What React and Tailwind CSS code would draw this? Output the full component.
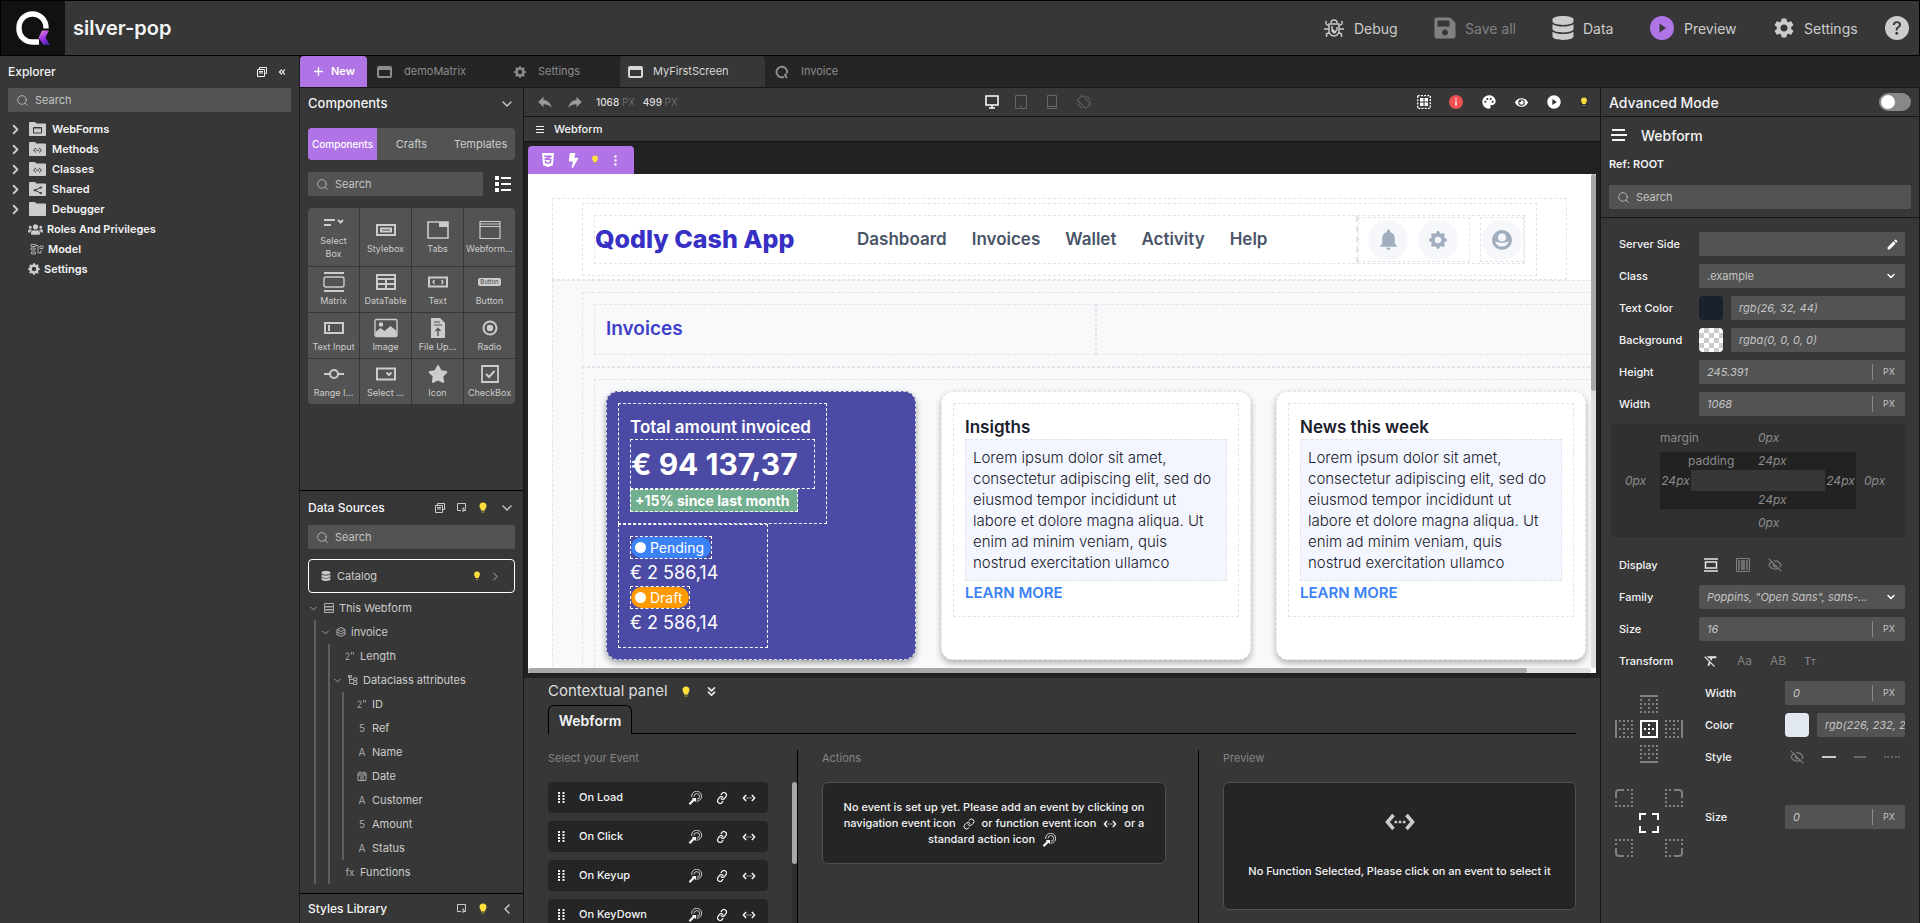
import { useState } from 'react'
import { ChevronDown, ChevronLeft, ChevronRight, ChevronsDown, ChevronsLeft, EyeOff, Link, Plus, Search } from 'lucide-react'
import { FaBolt, FaCss3Alt, FaDatabase, FaEye, FaSave, FaStar, FaUsers } from 'react-icons/fa'
import { BsGearFill, BsQuestionCircleFill, BsThreeDotsVertical } from 'react-icons/bs'
import {
  MdBorderBottom, MdBorderLeft, MdBorderOuter, MdBorderRight, MdBorderTop, MdEdit, MdFormatClear,
  MdNotifications, MdPalette, MdPlayCircle, MdReply, MdSettings
} from 'react-icons/md'

/* ---------- icons ---------- */

const Logo = ({ className }) => (
  <svg viewBox="0 0 34 34" className={className} fill="none">
    <defs>
      <linearGradient id="tail" x1="0.3" y1="0" x2="0.8" y2="1">
        <stop offset="0" stopColor="#e07bd8" />
        <stop offset="0.5" stopColor="#9b2fe8" />
        <stop offset="1" stopColor="#3b2a9c" />
      </linearGradient>
    </defs>
    <path d="M30 17.5V16.500A13.500 13.500 0 0 0 3 16.500V18A13 13 0 0 0 16 31H23" stroke="#fff" strokeWidth="5.400" />
    <path d="M26 19.500h7l-3.500 7L34 34h-6.500l-5-7.200z" fill="url(#tail)" />
  </svg>
)

const QIcon = ({ className }) => (
  <svg viewBox="0 0 14 14" className={className} fill="none" stroke="currentColor" strokeWidth="2">
    <path d="M12 8A5.300 5.300 0 1 0 7 12.300h2" />
    <path d="M11.500 8.500L10 10.500l2 2.500" />
  </svg>
)

const WindowIcon = ({ className }) => (
  <svg viewBox="0 0 15 12" className={className} fill="none" stroke="currentColor">
    <rect x="1" y="1" width="13" height="10" rx="1" strokeWidth="2" />
    <path d="M1 2.500h13" strokeWidth="3" />
  </svg>
)

const Bulb = ({ className }) => (
  <svg viewBox="0 0 8 12" className={className}>
    <path d="M4 .5A3.500 3.500 0 0 0 .5 4c0 2 1.500 2.500 1.500 4.500h4C6 6.500 7.500 6 7.500 4A3.500 3.500 0 0 0 4 .5z" fill="#ffdf3d" />
    <path d="M2.500 9.500h3v1h-3z" fill="#b9a13c" />
  </svg>
)

const CodeIcon = ({ className }) => (
  <svg viewBox="0 0 30 18" className={className} fill="none" stroke="currentColor" strokeWidth="3.500">
    <path d="M8.500 2L2.500 9l6 7M21.500 2l6 7-6 7" />
    <path d="M9.500 9h11" strokeWidth="2.600" strokeDasharray="2.600 1.600" />
  </svg>
)

const ActionIcon = ({ className }) => (
  <svg viewBox="0 0 14 14" className={className} fill="none" stroke="currentColor" strokeWidth=".8">
    <path d="M3.700 6A5 5 0 1 1 8.500 10.200" />
    <path d="M6 5.500A2.800 2.800 0 1 1 8.800 8.200" />
    <path d="M4 7h4v4L6.400 9.800 2.200 13.900.7 12.500l4-4.200z" fill="currentColor" stroke="none" />
  </svg>
)

const Grip = ({ className }) => (
  <svg viewBox="0 0 7 11" className={className} fill="currentColor">
    {[0, 3, 6, 9].map(y => (
      <g key={y}>
        <rect x="0" y={y} width="2" height="2" />
        <rect x="4.500" y={y} width="2" height="2" />
      </g>
    ))}
  </svg>
)

const BugIcon = ({ className }) => (
  <svg viewBox="0 0 20 20" className={className} fill="none" stroke="currentColor" strokeWidth="1.400">
    <path d="M7 5a3 3 0 0 1 6 0" />
    <path d="M5 6h10v7a5 5 0 0 1-10 0z" />
    <path d="M5 8L2 6V3M15 8l3-2V3M5 11H0M15 11h5M5.500 14.500L2.500 16v3M14.500 14.500l3 1.500v3" />
    <path d="M8 8v5l2 2 3-3V9M8 11l4 4" />
  </svg>
)

const PlayBadge = ({ className }) => (
  <svg viewBox="0 0 24 24" className={className}>
    <circle cx="12" cy="12" r="12" fill="#b174e6" />
    <path d="M9.500 7.500l6.500 4.500-6.500 4.500z" fill="#373737" />
  </svg>
)

const AccountIcon = ({ className }) => (
  <svg viewBox="0 0 20 20" className={className}>
    <circle cx="10" cy="10" r="10" fill="currentColor" />
    <path d="M3 11q2 1.500 7 1.500t7-1.500a7.200 7.200 0 0 1-14 0z" fill="#f5f7fa" />
    <circle cx="10" cy="7.500" r="5.200" fill="currentColor" />
    <circle cx="10" cy="7.500" r="4" fill="#f5f7fa" />
  </svg>
)

const folderGlyphs = {
  form: <path d="M4.500 5.500h8v5.500h-8z M4.500 6h8" />,
  code: <path d="M7 6L4.500 8.200 7 10.500M10 6l2.500 2.200L10 10.500M7 8.200h3" />,
  share: <path d="M11.500 5.500L6 8.200l5.500 2.800M11 5h1.500v1H11zM11 10.500h1.500v1H11zM5 7.800h1.500v1H5z" />,
  none: null,
}

const Folder = ({ glyph }) => (
  <svg viewBox="0 0 17 14" className="h-3.5 w-[17px] shrink-0" fill="none">
    <path d="M0 1Q0 0 1 0h5l1.500 1.500H16q1 0 1 1V13q0 1-1 1H1q-1 0-1-1z" fill="#ccc" />
    <g stroke="#3a3a3a">{folderGlyphs[glyph]}</g>
  </svg>
)

const ModelIcon = ({ className }) => (
  <svg viewBox="0 0 14 12" className={className} fill="none" stroke="currentColor">
    <path d="M1 1.500h4.500v2H1zM1 5h4v2H1zM1.500 9h4v2h-4zM10 3h3v2.500h-3zM6 2.500h2V10h3V7" />
  </svg>
)

const CollapseAll = ({ className }) => (
  <svg viewBox="0 0 10 10" className={className} fill="none" stroke="currentColor">
    <path d="M2.500 2.500v-2h7v6h-2M.5 2.500h7v7h-7zM2 6h4M2 4.500h4" />
  </svg>
)

const Inspect = ({ className }) => (
  <svg viewBox="0 0 10 10" className={className} fill="none" stroke="currentColor">
    <path d="M4 7.500H.5v-7h8V6M6 4.500v4.500M6 5l3 2.500H6" />
  </svg>
)

const ListIcon = ({ className }) => (
  <svg viewBox="0 0 16 16" className={className} fill="currentColor">
    <path d="M0 0h4v4H0zM0 6h4v4H0zM0 12h4v4H0zM6 1h10v2H6zM6 7h10v2H6zM6 13h10v2H6z" />
  </svg>
)

const tileIcons = {
  select: <><path d="M2 6h11M2 11h7" /><path d="M16 6l2.500 2.500L21 6" /></>,
  stylebox: <><path d="M3 5h18v10H3z" /><path d="M7 8.500h10v3H7z" /></>,
  tabs: <><path d="M2 2h20v16H2z" strokeWidth="1.600" /><path d="M13 2h9v5h-9z" fill="currentColor" stroke="none" /></>,
  webform: <path d="M2 1.500h20v17H2zM2 6.500h20M2 4h20" strokeWidth="1.200" />,
  matrix: <><path d="M2 1h20M2 19h20" /><rect x="2" y="5" width="20" height="10" rx="2" strokeWidth="1.400" /></>,
  table: <path d="M3 3h18v14H3zM3 7h18M3 12h18M12 7v10" />,
  text: <><path d="M3 5.500h18v9H3z" /><path d="M8.500 8L7 10l1.500 2M15.500 8l1.500 2-1.500 2" strokeWidth="1.400" /></>,
  input: <><path d="M3 5h18v10H3z" /><path d="M7 7v6" /></>,
  image: <><rect x="1" y="1.500" width="22" height="17" rx="1.500" strokeWidth="1.400" /><circle cx="7" cy="6.500" r="2.200" fill="currentColor" stroke="none" /><path d="M1.500 18v-4l5-4 4 3 6-5 6 5v5z" fill="currentColor" stroke="none" /></>,
  file: <><path d="M5 0h9l5 5v15H5z" fill="currentColor" stroke="none" /><path d="M8 4h6M8 7h8" stroke="#535353" strokeWidth="1" /><path d="M12 18v-7M9.500 13l2.500-2.500L14.500 13" stroke="#535353" strokeWidth="1.400" /></>,
  radio: <><circle cx="12" cy="10" r="6.500" /><circle cx="12" cy="10" r="3.200" fill="currentColor" stroke="none" /></>,
  range: <><path d="M2 10h6M16 10h6" /><circle cx="12" cy="10" r="4" /></>,
  dropdown: <><path d="M3 4.500h18v11H3z" /><path d="M12.500 8.500l2.500 2.500 2.500-2.500" /></>,
  checkbox: <><path d="M4 2h16v16H4z" strokeWidth="1.800" /><path d="M8 10l3 3 5.500-6" /></>,
}

const TileIcon = ({ name }) => {
  if (name === 'star') return <FaStar size={20} />
  if (name === 'button') return <span className="flex h-5 items-center"><span className="rounded-xs bg-[#ccc] px-0.5 text-[6px] leading-2 text-[#444]">Button</span></span>
  return (
    <svg viewBox="0 0 24 20" className="h-5 w-6" fill="none" stroke="currentColor" strokeWidth="2">{tileIcons[name]}</svg>
  )
}

/* ---------- shared bits ---------- */

const SearchBox = ({ id, className = '' }) => (
  <label htmlFor={id} className={`flex h-6 items-center gap-1.5 rounded-xs bg-[#535353] px-2 text-[#c4c4c4] ${className}`}>
    <Search size={13} strokeWidth={1.5} className="shrink-0" />
    <input id={id} type="text" placeholder="Search" className="w-full min-w-0 bg-transparent text-[11px] outline-none placeholder:text-[#c4c4c4]" />
  </label>
)

/* ---------- header ---------- */

const Header = () => (
  <header className="flex h-14 shrink-0 items-center border border-black bg-[#373737] text-[14px] text-[#ccc]">
    <div className="flex h-full w-16 items-center justify-center bg-[#111]">
      <Logo className="size-[34px]" />
    </div>
    <h1 className="ml-2 flex-1 text-[20px] font-semibold text-gray-100">silver-pop</h1>
    <nav className="flex items-center pr-2.5">
      <button className="flex w-[109px] items-center gap-2.5"><BugIcon className="size-5" />Debug</button>
      <button className="flex w-[118px] items-center gap-2 text-[#808080]"><FaSave size={24} />Save all</button>
      <button className="flex w-[99px] items-center gap-2"><FaDatabase size={24} />Data</button>
      <button className="flex w-[122px] items-center gap-2.5"><PlayBadge className="size-6" />Preview</button>
      <button className="flex w-[113px] items-center gap-2"><MdSettings size={24} />Settings</button>
      <button aria-label="Help"><BsQuestionCircleFill size={24} /></button>
    </nav>
  </header>
)

/* ---------- explorer ---------- */

const folders = [
  { name: 'WebForms', glyph: 'form' },
  { name: 'Methods', glyph: 'code' },
  { name: 'Classes', glyph: 'code' },
  { name: 'Shared', glyph: 'share' },
  { name: 'Debugger', glyph: 'none' },
]

const Explorer = () => (
  <aside className="w-[300px] shrink-0 border-r border-[#1c1c1c] bg-[#373737] px-2 text-gray-100">
    <div className="flex h-8 items-center gap-2.5 pr-1">
      <h2 className="flex-1 text-[12px] font-medium">Explorer</h2>
      <button aria-label="Collapse all"><CollapseAll className="size-2.5" /></button>
      <button aria-label="Hide panel"><ChevronsLeft size={10} strokeWidth={3} /></button>
    </div>
    <SearchBox id="search-files" />
    <ul className="pt-[7px] text-[11px] font-semibold">
      {folders.map(f => (
        <li key={f.name}>
          <button className="flex h-5 items-center gap-1.5">
            <ChevronRight size={15} strokeWidth={3} className="text-[#ccc]" />
            <Folder glyph={f.glyph} />
            {f.name}
          </button>
        </li>
      ))}
      <li><button className="flex h-5 items-center gap-1 pl-5"><FaUsers size={15} color="#ccc" />Roles And Privileges</button></li>
      <li><button className="flex h-5 items-center gap-1 pl-[22px]"><ModelIcon className="h-3 w-3.5 text-[#aaa]" />Model</button></li>
      <li><button className="flex h-5 items-center gap-1 pl-5"><BsGearFill size={12} color="#ccc" />Settings</button></li>
    </ul>
  </aside>
)

/* ---------- tabs ---------- */

const Tabs = () => (
  <div className="flex h-8 shrink-0 items-stretch border-b border-[#161616] bg-[#252525] text-[11px] text-[#8c8c8c]">
    <button className="mr-0.5 flex w-[67px] items-center gap-1.5 rounded-t-sm bg-[#b174e6] pl-3 font-semibold text-white"><Plus size={13} strokeWidth={2.5} />New</button>
    <button className="flex w-[137px] items-center gap-3 pl-2"><WindowIcon className="h-3 w-[15px]" />demoMatrix</button>
    <button className="flex w-[114px] items-center gap-3 pl-2"><BsGearFill size={12} />Settings</button>
    <button className="flex w-[145px] items-center gap-2.5 rounded-t-sm bg-[#373737] pl-2 text-[#d6d6d6]"><WindowIcon className="h-3 w-[15px]" />MyFirstScreen</button>
    <button className="flex items-center gap-3 pl-2.5"><QIcon className="size-3.5" />Invoice</button>
  </div>
)

/* ---------- components + data sources ---------- */

const tiles = [
  ['Select Box', 'select'], ['Stylebox', 'stylebox'], ['Tabs', 'tabs'], ['Webform...', 'webform'],
  ['Matrix', 'matrix'], ['DataTable', 'table'], ['Text', 'text'], ['Button', 'button'],
  ['Text Input', 'input'], ['Image', 'image'], ['File Up...', 'file'], ['Radio', 'radio'],
  ['Range I...', 'range'], ['Select ...', 'dropdown'], ['Icon', 'star'], ['CheckBox', 'checkbox'],
]

const attributes = [
  ['num', 'ID'], ['5', 'Ref'], ['A', 'Name'], ['cal', 'Date'], ['A', 'Customer'], ['5', 'Amount'], ['A', 'Status'],
]

const treeIcons = {
  form: <path d="M.5.5h9v3h-9zM.5 4h9v2.500h-9zM.5 7h9v2.500h-9z" />,
  stack: <path d="M5 .5L9 2.500 5 4.500 1 2.500zM1 5l4 2 4-2M1 7.500l4 2 4-2M1 2.500V8M9 2.500V8" />,
  branch: <path d="M1.500 0v8.500H5M1.500 4.500H5M.5.5h3v2h-3zM5.500 3h3.500v2.500H5.500zM5.500 7h3.500v2.500H5.500z" />,
  cal: <path d="M1 2h8v7.500H1zM1 4h8M3 .5V2M7 .5V2M3 6h4M3 8h4" />,
  num: <path d="M.8 3.500q0-1.500 1.700-1.500t1.700 1.500q0 1-3.400 5h3.800M6.500 1v2.500M8.500 1v2.500" strokeWidth=".9" />,
}

const TreeMark = ({ type }) => (
  <span className="flex w-3 shrink-0 justify-center text-[10px] leading-3 text-[#aaa]">
    {treeIcons[type] ? (
      <svg viewBox="0 0 10 10" className="size-2.5" fill="none" stroke="currentColor">{treeIcons[type]}</svg>
    ) : type}
  </span>
)

const TreeRow = ({ mark, label, open }) => (
  <button className="flex h-6 items-center gap-1">
    {open && <ChevronDown size={11} strokeWidth={1.5} className="shrink-0" />}
    <TreeMark type={mark} />
    {label}
  </button>
)

const Palette = () => {
  const [tab, setTab] = useState('Components')
  return (
    <aside className="flex w-56 shrink-0 flex-col border-r border-[#161616] text-[#ccc]">
      <section className="flex-1 px-2">
        <div className="flex h-8 items-center justify-between">
          <h2 className="text-[13px] font-medium text-gray-100">Components</h2>
          <button aria-label="Collapse components"><ChevronDown size={16} /></button>
        </div>
        <div className="mt-2 grid h-8 grid-cols-3 overflow-hidden rounded bg-[#535353] text-[11px]">
          {['Components', 'Crafts', 'Templates'].map(t => (
            <button key={t} onClick={() => setTab(t)} className={t === tab ? 'bg-[#b174e6] text-[10px] font-medium text-white' : ''}>{t}</button>
          ))}
        </div>
        <div className="mt-3 flex items-center gap-3 pr-1">
          <SearchBox id="search-components" className="flex-1" />
          <button aria-label="List view" className="text-white"><ListIcon className="size-4" /></button>
        </div>
        <div className="mt-3 grid grid-cols-4 gap-px overflow-hidden rounded">
          {tiles.map(([name, icon], i) => (
            <button key={name} className={`flex flex-col items-center justify-center bg-[#535353] text-[9px] leading-[13px] ${i < 4 ? 'h-[58px]' : 'h-[45px]'}`}>
              <TileIcon name={icon} />
              <span className={name === 'Select Box' ? 'w-8' : 'whitespace-nowrap pt-0.5'}>{name}</span>
            </button>
          ))}
        </div>
      </section>

      <section className="flex h-[403px] shrink-0 flex-col overflow-hidden border-t border-black px-2">
        <div className="flex h-[34px] shrink-0 items-center gap-3">
          <h2 className="flex-1 text-[12px] font-medium text-gray-100">Data Sources</h2>
          <button aria-label="Collapse sources"><CollapseAll className="size-2.5" /></button>
          <button aria-label="Inspect sources"><Inspect className="size-2.5" /></button>
          <Bulb className="h-3 w-2" />
          <button aria-label="Hide sources"><ChevronDown size={16} /></button>
        </div>
        <SearchBox id="search-sources" className="shrink-0" />
        <button className="mt-2.5 flex h-[34px] shrink-0 items-center gap-1.5 rounded-sm border border-white px-3 text-[11px]">
          <FaDatabase size={10} />
          <span className="flex-1 text-left">Catalog</span>
          <Bulb className="mr-0.5 h-2.5 w-2" />
          <ChevronRight size={13} strokeWidth={1.5} />
        </button>
        <div className="pt-[3px] text-[11px]">
          <TreeRow mark="form" label="This Webform" open />
          <div className="ml-1.5 border-l-2 border-[#5e5e5e] pl-1">
            <TreeRow mark="stack" label="invoice" open />
            <div className="ml-2 border-l-2 border-[#5e5e5e] pl-3.5">
              <TreeRow mark="num" label="Length" />
              <div className="-ml-3">
                <TreeRow mark="branch" label="Dataclass attributes" open />
                <div className="ml-2.5 border-l-2 border-[#5e5e5e] pl-3">
                  {attributes.map(([mark, label]) => <TreeRow key={label} mark={mark} label={label} />)}
                </div>
              </div>
              <TreeRow mark="fx" label="Functions" />
            </div>
          </div>
        </div>
      </section>

      <section className="flex h-[30px] shrink-0 items-center gap-3 border-t border-black px-2">
        <h2 className="flex-1 text-[12px] font-medium text-gray-100">Styles Library</h2>
        <button aria-label="Inspect styles"><Inspect className="size-2.5" /></button>
        <Bulb className="h-3 w-2" />
        <button aria-label="Show styles"><ChevronLeft size={16} /></button>
      </section>
    </aside>
  )
}

/* ---------- canvas ---------- */

const DeviceIcons = () => (
  <div className="flex items-center gap-5 pr-12 text-[#666]">
    <button aria-label="Desktop" className="text-white">
      <svg viewBox="0 0 14 14" className="size-3.5" fill="none" stroke="currentColor" strokeWidth="1.500"><path d="M1 1h12v9H1zM7 10v3M4 13h6" /></svg>
    </button>
    <button aria-label="Tablet" className="-ml-1">
      <svg viewBox="0 0 12 14" className="h-3.5 w-3" fill="none" stroke="currentColor"><path d="M.5.5h11v13H.5zM5 11.500h2" /></svg>
    </button>
    <button aria-label="Phone">
      <svg viewBox="0 0 10 14" className="h-3.5 w-2.5" fill="none" stroke="currentColor"><path d="M.5.500h9v13h-9zM.5 11.500h9" /></svg>
    </button>
    <button aria-label="Rotate">
      <svg viewBox="0 0 14 14" className="size-3.5" fill="none" stroke="currentColor">
        <rect x="3.500" y="1" width="7" height="12" rx="1" transform="rotate(-45 7 7)" />
        <path d="M1 8.500A6 6 0 0 0 5.500 13M8.500 1A6 6 0 0 1 13 5.500" />
      </svg>
    </button>
  </div>
)

const Toolbar = () => (
  <>
    <div className="flex h-[29px] shrink-0 items-center border-b border-[#161616] px-3 text-[10px]">
      <div className="flex flex-1 items-center">
        <button aria-label="Undo" className="text-[#999]"><MdReply size={18} /></button>
        <button aria-label="Redo" className="ml-3 text-[#999]"><MdReply size={18} className="-scale-x-100" /></button>
        <p className="ml-3 font-medium text-[#ddd]">1068 <span className="font-light text-[#777]">PX</span></p>
        <p className="ml-2 font-medium text-[#ddd]">499 <span className="font-light text-[#777]">PX</span></p>
      </div>
      <DeviceIcons />
      <div className="flex flex-1 items-center justify-end gap-[18px] text-white">
        <button aria-label="Grid">
          <svg viewBox="0 0 14 14" className="size-3.5" fill="currentColor">
            <path d="M3 3h3.500v3.500H3zM7.500 3H11v3.500H7.500zM3 7.500h3.500V11H3zM7.500 7.500H11V11H7.500z" />
            <path d="M.7.7h12.600v12.600H.7z" fill="none" stroke="currentColor" strokeWidth="1.300" strokeDasharray="2 1.200" />
          </svg>
        </button>
        <button aria-label="Errors">
          <svg viewBox="0 0 14 14" className="size-3.5"><circle cx="7" cy="7" r="7" fill="#ec5050" /><path d="M6.400 3h1.200v1.500H6.400zM6.400 5.500h1.200V11H6.400z" fill="#fff" /></svg>
        </button>
        <button aria-label="Theme"><MdPalette size={16} /></button>
        <button aria-label="Show"><FaEye size={13} /></button>
        <button aria-label="Run"><MdPlayCircle size={16} /></button>
        <Bulb className="h-2.5 w-2" />
      </div>
    </div>
    <div className="flex h-[25px] shrink-0 items-center gap-2.5 border-b border-[#161616] px-3 text-[11px] font-medium text-gray-100">
      <svg viewBox="0 0 8 8" className="size-2" stroke="currentColor"><path d="M0 1.500h8M0 4.500h8M0 7.500h8" /></svg>
      Webform
    </div>
  </>
)

const Lorem = 'Lorem ipsum dolor sit amet, consectetur adipiscing elit, sed do eiusmod tempor incididunt ut labore et dolore magna aliqua. Ut enim ad minim veniam, quis nostrud exercitation ullamco'

const TextCard = ({ title }) => (
  <div className="rounded-xl border border-dashed border-[#e2e4e8] bg-white p-[11px] shadow-[0_3px_6px_rgba(0,0,0,0.3)]">
    <div className="border border-dashed border-[#e2e4e8] p-[11px]">
      <h3 className="text-[17px] leading-6 font-semibold text-[#1a202c]">{title}</h3>
      <p className="h-[142px] border border-dashed border-[#dfe3ea] bg-[#f3f6ff] p-[7px] text-[15px] leading-[21px] font-light text-[#1a202c]">{Lorem}</p>
      <a href="#more" className="block text-[15px] leading-6 font-semibold text-[#3b82f6]">LEARN MORE</a>
    </div>
  </div>
)

const InvoiceCard = () => (
  <div className="rounded-xl border border-dashed border-[#e2e4e8] bg-[#4b4aa5] p-[11px] text-white shadow-[0_3px_6px_rgba(0,0,0,0.35)]">
    <div className="w-[209px] border border-dashed border-white p-[11px]">
      <h3 className="text-[17px] leading-6 font-semibold whitespace-nowrap">Total amount invoiced</h3>
      <p className="border border-dashed border-white text-[30px] leading-12 font-bold whitespace-nowrap">€ 94 137,37</p>
      <p className="w-[168px] border border-dashed border-white bg-[#72ae90] px-1 text-[14px] leading-[21px] font-bold whitespace-nowrap">+15% since last month</p>
    </div>
    <div className="w-[150px] border border-dashed border-white p-[11px]">
      <Status label="Pending" pill="w-[82px]" fill="bg-[#3b82f6]" />
      <Status label="Draft" pill="w-[60px]" fill="bg-[#ff9a00]" />
    </div>
  </div>
)

const Status = ({ label, pill, fill }) => (
  <>
    <div className={`border border-dashed border-white ${pill}`}>
      <p className={`flex h-[21px] items-center gap-1 rounded-full px-1 text-[14px] ${fill}`}>
        <span className="size-[11px] shrink-0 rounded-full bg-white" />
        {label}
      </p>
    </div>
    <p className="text-[18px] leading-[27px] whitespace-nowrap">€ 2 586,14</p>
  </>
)

const Page = () => (
  <div className="w-max p-6">
    <div className="w-[1015px] border border-dashed border-[#e2e4e8] px-[29px] pt-1 pb-[3px]">
      <div className="border border-dashed border-[#e2e4e8] p-[11px]">
        <div className="flex h-[49px] items-stretch border border-dashed border-[#e2e4e8]">
          <p className="flex w-[262px] items-center text-[25px] font-extrabold whitespace-nowrap text-[#3730c4]">Qodly Cash App</p>
          <nav className="flex flex-1 items-center gap-[25px] text-[17px] font-semibold text-[#4a5568]">
            <a href="#dashboard">Dashboard</a>
            <a href="#invoices">Invoices</a>
            <a href="#wallet">Wallet</a>
            <a href="#activity">Activity</a>
            <a href="#help">Help</a>
          </nav>
          <div className="flex items-center gap-2.5 border-l-2 border-dashed border-[#e2e4e8] text-[#a0aec0]">
            <div className="flex h-[45px] w-[112px] items-center gap-2.5 border border-dashed border-[#e2e4e8] pl-[9px]">
              <button aria-label="Notifications" className="flex size-10 items-center justify-center rounded-full bg-[#f5f7fa]"><MdNotifications size={25} /></button>
              <button aria-label="Page settings" className="flex size-10 items-center justify-center rounded-full bg-[#f5f7fa]"><BsGearFill size={18} /></button>
            </div>
            <div className="flex h-[45px] w-11 items-center justify-center border border-dashed border-[#e2e4e8]">
              <button aria-label="Account" className="flex size-10 items-center justify-center rounded-full bg-[#f5f7fa]"><AccountIcon className="size-5" /></button>
            </div>
          </div>
        </div>
      </div>
    </div>
    <div className="w-[1088px] border border-dashed border-[#e2e4e8] bg-[#f7f9fb] px-[29px] py-[11px]">
      <div className="border border-dashed border-[#e2e4e8] p-[11px]">
        <div className="grid grid-cols-2">
          <h2 className="h-[51px] border border-dashed border-[#e2e4e8] px-[11px] text-[19px] leading-12 font-semibold text-[#4040c8]">Invoices</h2>
          <div className="border border-dashed border-[#e2e4e8]" />
        </div>
      </div>
      <div className="border border-dashed border-[#e2e4e8] p-[11px]">
        <div className="border border-dashed border-[#e2e4e8] p-[11px]">
          <div className="grid grid-cols-3 gap-[25px]">
            <InvoiceCard />
            <TextCard title="Insigths" />
            <TextCard title="News this week" />
          </div>
        </div>
      </div>
    </div>
  </div>
)

const Canvas = () => (
  <div className="flex min-h-0 flex-1 flex-col bg-[#222] px-1 pt-1 pb-[5px]">
    <div className="flex h-7 w-[106px] shrink-0 items-center gap-2.5 rounded-t bg-[#b174e6] pl-3 text-white">
      <button aria-label="Styles"><FaCss3Alt size={16} /></button>
      <button aria-label="Events"><FaBolt size={15} /></button>
      <Bulb className="h-2.5 w-2" />
      <button aria-label="More"><BsThreeDotsVertical size={13} /></button>
    </div>
    <div className="grid min-h-0 flex-1 grid-cols-[minmax(0,1fr)_5px] grid-rows-[minmax(0,1fr)_5px] bg-white">
      <div className="overflow-hidden"><Page /></div>
      <div className="rounded bg-[#e0e0e0]"><div className="h-[44%] rounded bg-[#a8a8a8]" /></div>
      <div className="rounded bg-[#e0e0e0]"><div className="h-[5px] w-[94%] rounded bg-[#a8a8a8]" /></div>
    </div>
  </div>
)

/* ---------- contextual panel ---------- */

const events = ['On Load', 'On Click', 'On Keyup', 'On KeyDown']

const ContextualPanel = () => (
  <section className="flex h-[245px] shrink-0 flex-col overflow-hidden px-6 text-gray-100">
    <div className="flex h-[27px] shrink-0 items-center gap-3.5">
      <h2 className="text-[15px] text-[#ddd]">Contextual panel</h2>
      <Bulb className="h-3 w-2" />
      <button aria-label="Hide panel"><ChevronsDown size={15} strokeWidth={2.5} /></button>
    </div>
    <div className="flex h-[29px] shrink-0">
      <button className="w-[84px] rounded-t-md border border-b-0 border-black text-[14px] font-semibold">Webform</button>
      <div className="flex-1 border-b border-black" />
    </div>
    <div className="mt-4 flex min-h-0 flex-1">
      <div className="flex w-[250px] shrink-0 flex-col border-r border-black">
        <h3 className="h-8 shrink-0 text-[11px] leading-4 text-[#858585]">Select your Event</h3>
        <div className="flex min-h-0 justify-between">
          <ul className="w-[220px] space-y-2 text-[11px] font-medium">
            {events.map(e => (
              <li key={e} className="flex h-[31px] items-center gap-3.5 rounded bg-[#252525] pr-3 pl-2.5">
                <Grip className="h-[11px] w-[7px]" />
                <span className="flex-1 whitespace-nowrap">{e}</span>
                <button aria-label={`${e} action`}><ActionIcon className="size-3.5" /></button>
                <button aria-label={`${e} link`}><Link size={12} strokeWidth={2.5} className="-rotate-12" /></button>
                <button aria-label={`${e} function`}><CodeIcon className="h-2 w-3.5" /></button>
              </li>
            ))}
          </ul>
          <div className="w-[5px] bg-[#2f2f2f]"><div className="h-[82px] rounded bg-[#a8a8a8]" /></div>
        </div>
      </div>
      <div className="w-[401px] shrink-0 border-r border-black px-6">
        <h3 className="h-8 text-[11px] leading-4 text-[#858585]">Actions</h3>
        <p className="mr-2 flex h-[82px] items-center rounded-md border border-[#505050] bg-[#252525] px-4 text-center text-[11px] leading-4 font-medium">
          <span>
            No event is set up yet. Please add an event by clicking on navigation event icon <Link size={12} className="mx-1 inline" /> or function event icon <CodeIcon className="mx-1 inline h-2 w-3.5" /> or a standard action icon <ActionIcon className="mx-1 inline size-3.5" />
          </span>
        </p>
      </div>
      <div className="flex-1 pl-6">
        <h3 className="h-8 text-[11px] leading-4 text-[#858585]">Preview</h3>
        <div className="flex h-32 flex-col items-center rounded-md border border-[#505050] bg-[#252525] pt-[30px] text-center text-[11px] font-medium">
          <CodeIcon className="h-[18px] w-8 text-[#ccc]" />
          <p className="mt-8 leading-4">No Function Selected, Please click on an event to select it</p>
        </div>
      </div>
    </div>
  </section>
)

/* ---------- properties ---------- */

const Row = ({ label, id, children }) => (
  <div className="flex h-6 items-center text-[11px]">
    <label htmlFor={id} className="w-20 shrink-0 font-medium text-gray-100">{label}</label>
    {children}
  </div>
)

const UnitInput = ({ id, value }) => (
  <div className="flex h-6 min-w-0 flex-1 items-center rounded-xs bg-[#535353] text-[#c4c4c4]">
    <input id={id} type="text" defaultValue={value} className="w-full min-w-0 bg-transparent pl-2 italic outline-none" />
    <span className="shrink-0 border-l border-[#8a8a8a] px-2.5 text-[9px] leading-4">PX</span>
  </div>
)

const ColorInput = ({ id, value, swatch }) => (
  <div className="flex min-w-0 flex-1 gap-2">
    <button aria-label={`Pick ${id}`} className={`size-6 shrink-0 rounded ${swatch}`} />
    <input id={id} type="text" defaultValue={value} className="h-6 w-full min-w-0 rounded-xs bg-[#535353] pl-2 text-[#c4c4c4] italic outline-none" />
  </div>
)

const SelectInput = ({ id, value, className = '' }) => (
  <div className="relative h-6 min-w-0 flex-1">
    <select id={id} className={`h-6 w-full appearance-none truncate rounded-xs bg-[#535353] pr-8 pl-2 text-[#c4c4c4] outline-none ${className}`}>
      <option>{value}</option>
    </select>
    <ChevronDown size={12} strokeWidth={3} className="pointer-events-none absolute top-1.5 right-2 text-white" />
  </div>
)

const BoxModel = () => (
  <div className="-ml-2 grid h-[113px] grid-cols-[49px_196px_49px] grid-rows-[28px_57px_28px] bg-[#303030] text-[12px] text-[#8c8c8c]">
    <div />
    <div className="flex items-center"><span className="w-[98px]">margin</span><em>0px</em></div>
    <div />
    <em className="flex items-center justify-center">0px</em>
    <div className="grid grid-cols-[31px_134px_31px] grid-rows-[18px_21px_18px] items-center bg-[#222]">
      <div className="col-span-3 flex pl-7"><span className="w-[70px]">padding</span><em>24px</em></div>
      <em className="text-center">24px</em>
      <div className="h-full bg-[#373737]" />
      <em className="text-center">24px</em>
      <em className="col-span-3 pl-[98px]">24px</em>
    </div>
    <em className="flex items-center pl-2">0px</em>
    <div />
    <em className="flex items-center pl-[98px]">0px</em>
    <div />
  </div>
)

const Corner = ({ className }) => (
  <svg viewBox="0 0 18 18" className={className} fill="none" stroke="currentColor" strokeWidth="2">
    <path d="M1 9V4q0-3 3-3h5" />
    <path d="M12 1h6M17 4v14M1 12v6M4 17h12" strokeDasharray="2 2" />
  </svg>
)

const Properties = () => (
  <aside className="w-80 shrink-0 border-x border-[#161616] text-[11px]">
    <div className="flex h-[29px] items-center justify-between border-b border-[#161616] px-2">
      <label htmlFor="advanced" className="text-[14px] font-medium text-gray-100">Advanced Mode</label>
      <input id="advanced" type="checkbox" className="flex h-[18px] w-8 appearance-none items-center rounded-full bg-[#888] px-0.5 before:size-3.5 before:rounded-full before:bg-white checked:justify-end" />
    </div>
    <div className="border-b border-[#161616] px-2 pb-2">
      <h2 className="flex h-9 items-center gap-3.5 pl-0.5 text-[14px] font-medium text-gray-100">
        <svg viewBox="0 0 16 12" className="h-3 w-4" stroke="currentColor" strokeWidth="2"><path d="M1 1h13M0 6h16M1 11h13" /></svg>
        Webform
      </h2>
      <p className="h-8 leading-[22px] font-semibold text-gray-100">Ref: ROOT</p>
      <SearchBox id="search-props" />
    </div>
    <div className="space-y-2 pt-3.5 pr-3.5 pl-[18px]">
      <Row label="Server Side" id="server">
        <div className="flex h-6 flex-1 items-center rounded-xs bg-[#535353] pr-1.5">
          <input id="server" type="text" className="w-full min-w-0 bg-transparent pl-2 outline-none" />
          <MdEdit size={13} className="shrink-0 text-white" />
        </div>
      </Row>
      <Row label="Class" id="class"><SelectInput id="class" value=".example" /></Row>
      <Row label="Text Color" id="text-color"><ColorInput id="text-color" value="rgb(26, 32, 44)" swatch="bg-[#1a202c]" /></Row>
      <Row label="Background" id="background">
        <ColorInput id="background" value="rgba(0, 0, 0, 0)" swatch="bg-[repeating-conic-gradient(#ccc_0_25%,#fff_0_50%)] bg-[length:10px_10px]" />
      </Row>
      <Row label="Height" id="height"><UnitInput id="height" value="245.391" /></Row>
      <Row label="Width" id="width"><UnitInput id="width" value="1068" /></Row>
      <div className="pb-2"><BoxModel /></div>
      <Row label="Display">
        <div className="flex items-center gap-[18px] pl-[5px] text-[#808080]">
          <button aria-label="Block" className="text-gray-200"><svg viewBox="0 0 14 14" className="size-3.5" fill="none" stroke="currentColor" strokeWidth="1.500"><path d="M0 1h14M0 13h14M1.500 4h11v6h-11z" /></svg></button>
          <button aria-label="Flex"><svg viewBox="0 0 14 14" className="size-3.5" fill="none" stroke="currentColor"><path d="M.5.5h13v13H.5z" /><path d="M3 2v10M6 2v10M8 2v10M11 2v10" strokeWidth="1.500" /></svg></button>
          <button aria-label="Hidden"><EyeOff size={14} /></button>
        </div>
      </Row>
      <Row label="Family" id="family"><SelectInput id="family" value={'Poppins, "Open Sans", sans-...'} className="italic" /></Row>
      <Row label="Size" id="size"><UnitInput id="size" value="16" /></Row>
      <Row label="Transform">
        <div className="flex items-center gap-[18px] pl-1 text-[12px] text-[#808080]">
          <button aria-label="None" className="text-gray-200"><MdFormatClear size={16} /></button>
          <button>Aa</button>
          <button>AB</button>
          <button className="text-[10px] font-semibold">T<span className="text-[8px]">T</span></button>
        </div>
      </Row>
      <div className="-ml-2 flex">
        <div className="grid h-[75px] w-[94px] shrink-0 grid-cols-[25px_25px_25px] grid-rows-[25px_25px_25px] place-content-start items-center justify-items-center pt-2.5 text-[#808080]">
          <button aria-label="Border top" className="col-start-2"><MdBorderTop size={24} /></button>
          <button aria-label="Border left" className="col-start-1"><MdBorderLeft size={24} /></button>
          <button aria-label="Border all" className="text-white"><MdBorderOuter size={24} /></button>
          <button aria-label="Border right"><MdBorderRight size={24} /></button>
          <button aria-label="Border bottom" className="col-start-2"><MdBorderBottom size={24} /></button>
        </div>
        <div className="min-w-0 flex-1 space-y-2">
          <Row label="Width" id="border-width"><UnitInput id="border-width" value="0" /></Row>
          <Row label="Color" id="border-color"><ColorInput id="border-color" value="rgb(226, 232, 240)" swatch="bg-[#e2e8f0]" /></Row>
          <Row label="Style">
            <div className="flex items-center gap-[18px] pl-[5px] text-[#808080]">
              <button aria-label="No border"><EyeOff size={14} /></button>
              <button aria-label="Solid" className="w-3.5 border-t-2 border-[#ccc]" />
              <button aria-label="Dashed" className="w-3 border-t-2 border-dashed border-[#666]" />
              <button aria-label="Dotted" className="w-4 border-t-2 border-dotted border-[#666]" />
            </div>
          </Row>
        </div>
      </div>
      <div className="-ml-2 flex items-start pt-2">
        <div className="grid w-[94px] shrink-0 grid-cols-[25px_25px_25px] grid-rows-[25px_25px_25px] items-center justify-items-center text-[#808080]">
          <button aria-label="Radius top left" className="col-start-1"><Corner className="size-[18px]" /></button>
          <button aria-label="Radius top right" className="col-start-3"><Corner className="size-[18px] rotate-90" /></button>
          <button aria-label="Radius all" className="col-start-2 text-white">
            <svg viewBox="0 0 20 20" className="size-5" fill="none" stroke="currentColor" strokeWidth="2"><path d="M1 7V1h6M13 1h6v6M19 13v6h-6M7 19H1v-6" /></svg>
          </button>
          <button aria-label="Radius bottom left" className="col-start-1"><Corner className="size-[18px] -rotate-90" /></button>
          <button aria-label="Radius bottom right" className="col-start-3"><Corner className="size-[18px] rotate-180" /></button>
        </div>
        <div className="min-w-0 flex-1 pt-5"><Row label="Size" id="radius"><UnitInput id="radius" value="0" /></Row></div>
      </div>
    </div>
  </aside>
)

const App = () => (
  <div className="flex h-screen flex-col overflow-hidden bg-[#373737] font-['Inter',sans-serif]">
    <Header />
    <div className="flex min-h-0 flex-1">
      <Explorer />
      <div className="flex min-w-0 flex-1 flex-col">
        <Tabs />
        <div className="flex min-h-0 flex-1">
          <Palette />
          <main className="flex min-w-0 flex-1 flex-col">
            <Toolbar />
            <Canvas />
            <ContextualPanel />
          </main>
          <Properties />
        </div>
      </div>
    </div>
  </div>
)

export default App
